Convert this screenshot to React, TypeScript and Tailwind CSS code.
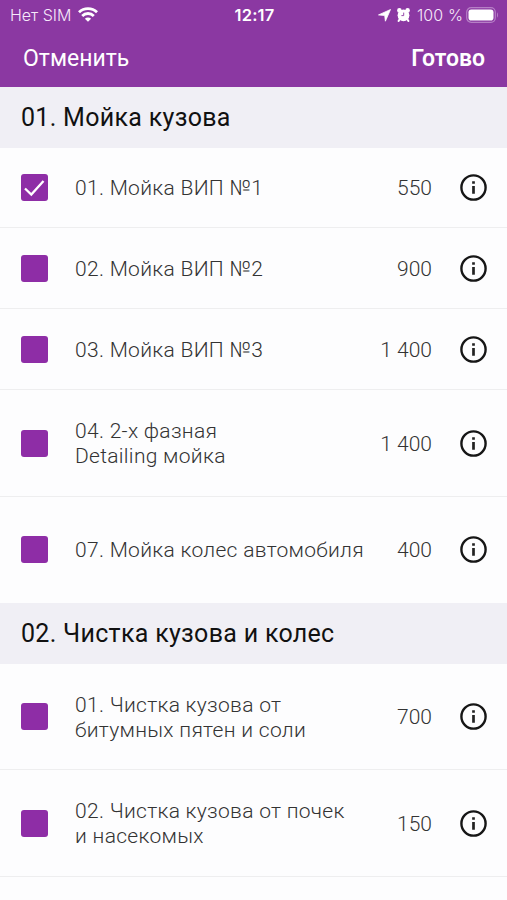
import { Fragment } from "react";

interface Service {
  title: string[];
  price: string;
  height: string;
  checked?: boolean;
}

interface ServiceGroup {
  title: string;
  services: Service[];
}

const groups: ServiceGroup[] = [
  {
    title: "01. Мойка кузова",
    services: [
      { title: ["01. Мойка ВИП №1"], price: "550", height: "h-20", checked: true },
      { title: ["02. Мойка ВИП №2"], price: "900", height: "h-[81px]" },
      { title: ["03. Мойка ВИП №3"], price: "1 400", height: "h-[81px]" },
      { title: ["04. 2-х фазная", "Detailing мойка"], price: "1 400", height: "h-[107px]" },
      { title: ["07. Мойка колес автомобиля"], price: "400", height: "h-[106px]" },
    ],
  },
  {
    title: "02. Чистка кузова и колес",
    services: [
      { title: ["01. Чистка кузова от", "битумных пятен и соли"], price: "700", height: "h-[106px]" },
      { title: ["02. Чистка кузова от почек", "и насекомых"], price: "150", height: "h-[107px]" },
    ],
  },
];

function StatusBar() {
  return (
    <div className="grid h-[30px] grid-cols-[1fr_auto_1fr] items-center pl-2.5 pr-2 font-['Inter',sans-serif] text-[16px] leading-5 text-[#f6e9fa]">
      <div className="flex items-center gap-[7px]">
        <span>Нет SIM</span>
        <svg className="-mt-px" width="20" height="15" viewBox="0 0 20 15" fill="none" stroke="#fff" strokeWidth="2.8">
          <path d="M1 5.3a12.8 12.8 0 0 1 18 0" />
          <path d="M4.2 8.9a8.2 8.2 0 0 1 11.6 0" />
          <path d="M10 14.8 6.9 11.7a4.4 4.4 0 0 1 6.2 0Z" fill="#fff" stroke="none" />
        </svg>
      </div>
      <span className="text-[16.5px] font-semibold tracking-[0.15px] text-white">12:17</span>
      <div className="flex items-center justify-end">
        <svg width="13" height="13" viewBox="0 0 13 13" fill="#fff" stroke="#fff" strokeWidth="0.8" strokeLinejoin="round">
          <path d="M12.5.5 7.4 12.2 6.7 6.5.5 5.9Z" />
        </svg>
        <svg className="-mt-px ml-1.5" width="13" height="14" viewBox="0 0 13 14">
          <circle cx="2.4" cy="2.4" r="2.3" fill="#fff" />
          <circle cx="10.6" cy="2.4" r="2.3" fill="#fff" />
          <path d="m2.5 11.5-.9 1.5M10.5 11.5l.9 1.5" stroke="#fff" strokeWidth="2" strokeLinecap="round" />
          <circle cx="6.5" cy="7.3" r="5.9" fill="#fff" />
          <path d="M6.7 4.6v3H4.4" fill="none" stroke="#8b38a2" strokeWidth="0.9" />
        </svg>
        <span className="ml-[7px] tracking-[0.1px]">100 %</span>
        <svg className="-mt-px ml-[3px]" width="33" height="16" viewBox="0 0 33 16">
          <rect x=".7" y=".7" width="28.6" height="14.6" rx="4.5" fill="none" stroke="#b67fc6" strokeWidth="1.2" />
          <rect x="2.5" y="2.5" width="25" height="11" rx="2.8" fill="#fff" />
          <path d="M31 5.5c1.3.6 1.3 4.4 0 5Z" fill="#b67fc6" />
        </svg>
      </div>
    </div>
  );
}

function Checkbox({ checked }: { checked?: boolean }) {
  return (
    <span className="flex size-[27px] shrink-0 items-center justify-center rounded-[3px] bg-[#8e2da6]">
      {checked && (
        <svg width="27" height="27" viewBox="0 0 27 27" fill="none" stroke="#fff" strokeWidth="2.3">
          <path d="m4 14.5 6.3 6L22.5 7" />
        </svg>
      )}
    </span>
  );
}

function InfoIcon() {
  return (
    <svg className="ml-7 shrink-0" width="27" height="27" viewBox="0 0 27 27" fill="none">
      <circle cx="13.5" cy="13.5" r="12.1" stroke="#161616" strokeWidth="2.4" />
      <path d="M13.5 12v7.7M13.5 7.2v2.5" stroke="#222" strokeWidth="2.7" />
    </svg>
  );
}

function ServiceRow({ service, last }: { service: Service; last: boolean }) {
  return (
    <li
      className={`flex items-center border-b pl-[21px] pr-5 ${service.height} ${
        last ? "border-transparent" : "border-[#eeeeef]"
      }`}
    >
      <Checkbox checked={service.checked} />
      <p className="ml-[27px] grow pt-[2px] text-[21px] leading-[25px] tracking-[0.3px]">
        {service.title.map((line) => (
          <span key={line} className="block whitespace-nowrap">
            {line}
          </span>
        ))}
      </p>
      <span className="pt-[2px] text-[21px] leading-[25px]">{service.price}</span>
      <InfoIcon />
    </li>
  );
}

export default function App() {
  return (
    <div className="h-[900px] w-[507px] overflow-hidden bg-[#fdfdfe] font-['Roboto',sans-serif] font-light text-[#333]">
      <header className="h-[87px] bg-[#8b38a2] text-white">
        <StatusBar />
        <div className="flex h-[57px] items-center justify-between pl-[23px] pr-[22px] pt-px text-[23px]">
          <button className="font-normal">Отменить</button>
          <button className="font-semibold">Готово</button>
        </div>
      </header>

      {groups.map((group, index) => (
        <Fragment key={group.title}>
          <h2 className="flex h-[61px] items-center bg-[#f0eff5] pl-[21px] text-[25px] font-normal tracking-[0.3px] text-[#111]">
            {group.title}
          </h2>
          <ul>
            {group.services.map((service, i) => (
              <ServiceRow
                key={service.title[0]}
                service={service}
                last={index < groups.length - 1 && i === group.services.length - 1}
              />
            ))}
          </ul>
        </Fragment>
      ))}
    </div>
  );
}
